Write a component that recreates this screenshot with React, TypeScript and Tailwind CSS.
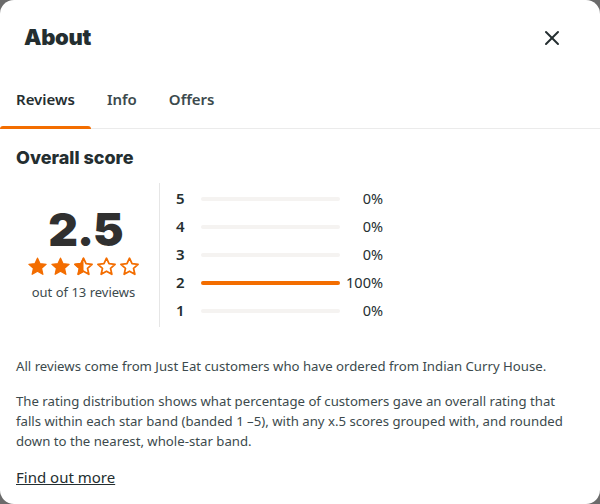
import React from 'react';
import { X } from 'lucide-react';

const ORANGE = '#f36d00';

const bands = [
  { star: 5, pct: 0 },
  { star: 4, pct: 0 },
  { star: 3, pct: 0 },
  { star: 2, pct: 100 },
  { star: 1, pct: 0 },
];

const Star: React.FC<{ fill: 'full' | 'half' | 'empty'; id: string }> = ({ fill, id }) => {
  const d =
    'M12 2.5l2.9 6.3 6.9.7-5.2 4.6 1.5 6.8L12 17.4l-6.1 3.5 1.5-6.8-5.2-4.6 6.9-.7z';
  return (
    <svg width="21" height="21" viewBox="0 0 24 24">
      <defs>
        <clipPath id={id}>
          <rect x="0" y="0" width="12" height="24" />
        </clipPath>
      </defs>
      {fill === 'full' && <path d={d} fill={ORANGE} stroke={ORANGE} strokeWidth="1.5" strokeLinejoin="round" />}
      {fill === 'empty' && (
        <path d={d} fill="none" stroke={ORANGE} strokeWidth="2" strokeLinejoin="round" />
      )}
      {fill === 'half' && (
        <>
          <path d={d} fill="none" stroke={ORANGE} strokeWidth="2" strokeLinejoin="round" />
          <path d={d} fill={ORANGE} stroke={ORANGE} strokeWidth="1.5" strokeLinejoin="round" clipPath={`url(#${id})`} />
        </>
      )}
    </svg>
  );
};

export default function App() {
  const stars: ('full' | 'half' | 'empty')[] = ['full', 'full', 'half', 'empty', 'empty'];

  return (
    <div className="w-[600px] h-[504px] bg-[#6b6b6b]" style={{ fontFamily: '"Noto Sans", sans-serif' }}>
      <div className="w-full h-full bg-white rounded-[14px] overflow-hidden flex flex-col text-[#242e30]">
        {/* Header */}
        <div className="flex items-center justify-between pl-6 pr-[36px] pt-[20px] h-[55px]">
          <h1
            className="text-[22px] font-black tracking-[-0.3px] text-[#242e30]"
            style={{ fontFamily: 'Inter, sans-serif' }}
          >
            About
          </h1>
          <X className="w-[24px] h-[24px] text-[#242e30]" strokeWidth={2} />
        </div>

        {/* Tabs */}
        <div className="flex mt-[33px] border-b border-[#ebebeb] text-[15px] font-semibold text-[#3c4a4d]">
          <div className="relative px-4 pb-[17px]">
            <span className="text-[#242e30]">Reviews</span>
            <div className="absolute left-0 right-0 -bottom-px h-[3px] bg-[#f36d00] rounded-t-sm" />
          </div>
          <div className="px-4 pb-[17px]">Info</div>
          <div className="px-4 pb-[17px]">Offers</div>
        </div>

        {/* Body */}
        <div className="px-4">
          <h2
            className="mt-[18px] text-[18px] font-extrabold text-[#242e30] leading-[22px]"
            style={{ fontFamily: 'Inter, sans-serif' }}
          >
            Overall score
          </h2>

          <div className="flex mt-[14px]">
            <div className="w-[144px] border-r border-[#e6e6e6] flex flex-col items-center justify-center">
              <div
                className="text-[46px] font-black leading-[46px] tracking-[-1px] text-[#303030] -ml-1"
                style={{ fontFamily: 'Inter, sans-serif' }}
              >
                2.5
              </div>
              <div className="flex gap-[2px] mt-[4px] -ml-2">
                {stars.map((s, i) => (
                  <Star key={i} fill={s} id={`clip-${i}`} />
                ))}
              </div>
              <div className="text-[13px] text-[#3c4a4d] mt-[6px] -ml-2">out of 13 reviews</div>
            </div>

            <div className="flex flex-col pl-4 py-[2px]">
              {bands.map((b) => (
                <div key={b.star} className="flex items-center h-[28px]">
                  <span className="w-[25px] text-[15px] font-semibold text-[#242e30]">{b.star}</span>
                  <div className="w-[139px] h-[4px] rounded-full bg-[#f5f3f1]">
                    <div
                      className="h-full rounded-full bg-[#f36d00]"
                      style={{ width: `${b.pct}%` }}
                    />
                  </div>
                  <span className="w-[43px] text-right text-[14.5px] text-[#242e30]">{b.pct}%</span>
                </div>
              ))}
            </div>
          </div>

          <div className="text-[13.2px] max-w-[560px]">
            <p className="mt-[29px] leading-[20px] text-[#3c4a4d]">
              All reviews come from Just Eat customers who have ordered from Indian Curry House.
            </p>
            <p className="mt-[15px] leading-[20px] text-[#3c4a4d]">
              The rating distribution shows what percentage of customers gave an overall rating that falls
              within each star band (banded 1 –5), with any x.5 scores grouped with, and rounded down to the
              nearest, whole-star band.
            </p>
            <a href="#" className="block mt-[15px] text-[15px] underline text-[#242e30]">
              Find out more
            </a>
          </div>
        </div>
      </div>
    </div>
  );
}
